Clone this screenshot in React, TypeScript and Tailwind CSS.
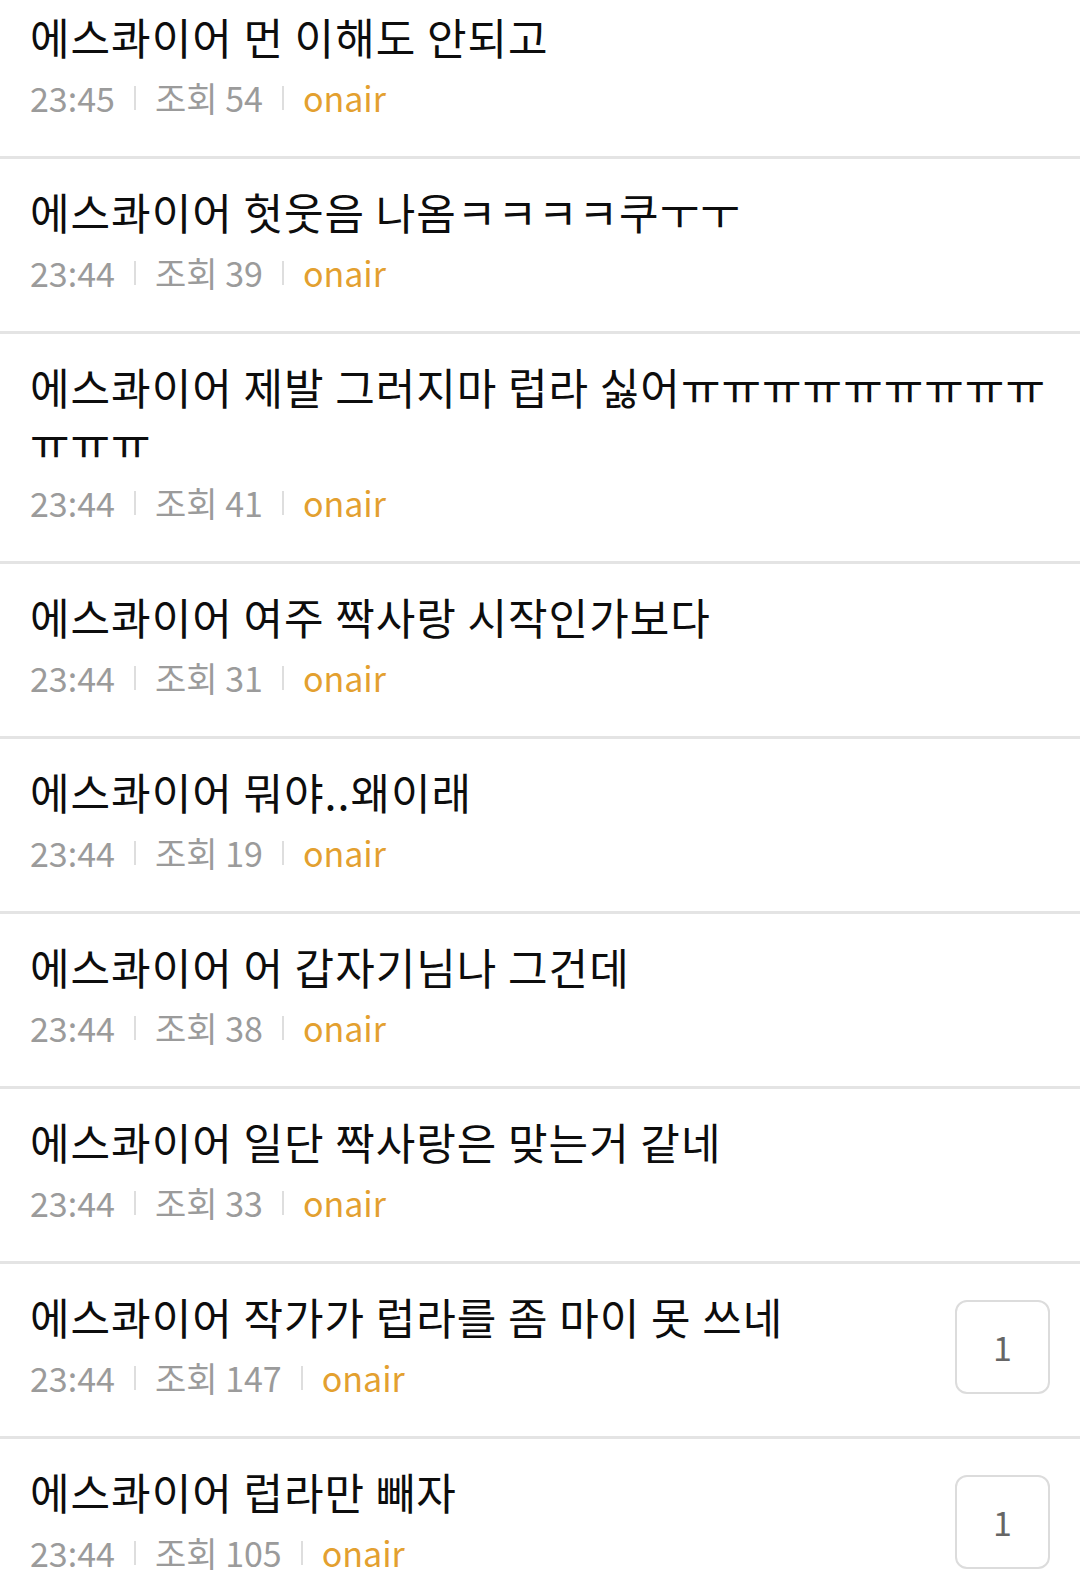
import React from 'react';

interface Post {
  title: string;
  time: string;
  views: number;
  comments?: number;
}

const posts: Post[] = [
  { title: '에스콰이어 먼 이해도 안되고', time: '23:45', views: 54 },
  { title: '에스콰이어 헛웃음 나옴ㅋㅋㅋㅋ쿠ㅜㅜ', time: '23:44', views: 39 },
  { title: '에스콰이어 제발 그러지마 럽라 싫어ㅠㅠㅠㅠㅠㅠㅠㅠㅠㅠㅠㅠ', time: '23:44', views: 41 },
  { title: '에스콰이어 여주 짝사랑 시작인가보다', time: '23:44', views: 31 },
  { title: '에스콰이어 뭐야..왜이래', time: '23:44', views: 19 },
  { title: '에스콰이어 어 갑자기님나 그건데', time: '23:44', views: 38 },
  { title: '에스콰이어 일단 짝사랑은 맞는거 같네', time: '23:44', views: 33 },
  { title: '에스콰이어 작가가 럽라를 좀 마이 못 쓰네', time: '23:44', views: 147, comments: 1 },
  { title: '에스콰이어 럽라만 빼자', time: '23:44', views: 105, comments: 1 },
];

const Sep = () => <span className="inline-block w-[2px] h-[24px] bg-[#dedede]" />;

const PostRow = ({ post }: { post: Post }) => (
  <li className="flex items-center gap-6 px-[30px] pt-[25px] pb-[38px] border-b-[3px] border-[#e4e4e4]">
    <div className="flex-1 min-w-0">
      <p className="text-[43px] leading-[55px] tracking-[1px] text-[#0d0d0d] break-all">{post.title}</p>
      <div className="mt-[14px] flex items-center gap-[19px] text-[34px] leading-[40px] text-[#9b9b9b]">
        <span>{post.time}</span>
        <Sep />
        <span>조회 {post.views}</span>
        <Sep />
        <span className="text-[#e3a02f]">onair</span>
      </div>
    </div>
    {post.comments !== undefined && (
      <div className="w-[95px] h-[94px] mt-[6px] shrink-0 flex items-center justify-center rounded-[12px] border-2 border-[#dcdcdc] text-[34px] text-[#666]">
        {post.comments}
      </div>
    )}
  </li>
);

export default function App() {
  return (
    <div
      className="w-[1080px] h-[1588px] overflow-hidden bg-white"
      style={{ fontFamily: '"Noto Sans CJK KR", "Noto Sans", sans-serif' }}
    >
      <ul className="-mt-[16px]">
        {posts.map((p, i) => (
          <PostRow key={i} post={p} />
        ))}
      </ul>
    </div>
  );
}
